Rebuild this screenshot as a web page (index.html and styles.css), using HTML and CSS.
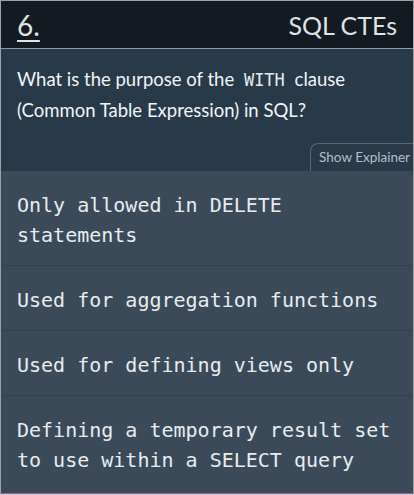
FILE: index.html
```html
<!DOCTYPE html>
<html>
<head>
<meta charset="utf-8">
<link rel="stylesheet" href="styles.css">
</head>
<body>
<div class="frame">
  <header class="top">
    <span class="num">6.</span>
    <span class="topic">SQL CTEs</span>
  </header>
  <section class="question">
    <p class="qtext">What is the purpose of the <code>WITH</code> clause (Common Table Expression) in SQL?</p>
    <div class="tabrow"><span class="tab">Show Explainer</span></div>
  </section>
  <ul class="options">
    <li>Only allowed in DELETE statements</li>
    <li>Used for aggregation functions</li>
    <li>Used for defining views only</li>
    <li>Defining a temporary result set to use within a SELECT query</li>
  </ul>
</div>
</body>
</html>
```
FILE: styles.css
```css
html, body {
  margin: 0;
  padding: 0;
  background: #d6c6d6;
}
.frame {
  width: 412px;
  height: 492px;
  border: 1px solid #9ea2a6;
  border-bottom-color: #8a6c8c;
  background: #3a4a59;
  overflow: hidden;
  display: flex;
  flex-direction: column;
}
.top {
  height: 47px;
  background: #141a21;
  border-bottom: 1px solid #8e9ba6;
  display: flex;
  align-items: center;
  justify-content: space-between;
  padding: 0 16px 0 16px;
  color: #dfe3e6;
  font-family: Lato, "Open Sans", sans-serif;
}
.num {
  font-size: 28px;
  font-weight: 400;
  text-decoration: underline;
  text-underline-offset: 4px;
  text-decoration-thickness: 2px;
}
.topic {
  font-size: 25px;
  font-weight: 400;
}
.question {
  background: #283a4a;
  padding: 15px 0 0 16px;
  display: flex;
  flex-direction: column;
}
.qtext {
  margin: 0;
  padding-right: 12px;
  font-family: Lato, "Open Sans", sans-serif;
  font-size: 18.5px;
  line-height: 30px;
  color: #f2f4f6;
}
.qtext code {
  display: inline-block;
  font-family: "DejaVu Sans Mono", monospace;
  font-size: 17px;
  line-height: 30px;
  margin: 0 5px;
  color: #e6eaee;
}
.tabrow {
  display: flex;
  justify-content: flex-end;
  margin-top: 18px;
}
.tab {
  border: 1px solid #55667a;
  border-right: none;
  border-bottom: none;
  border-top-left-radius: 8px;
  padding: 5px 3px 6px 8px;
  font-family: Lato, "Open Sans", sans-serif;
  font-size: 13.5px;
  line-height: 16px;
  color: #b6bec6;
}
.options {
  list-style: none;
  margin: 0;
  padding: 0;
  background: #3a4a59;
}
.options li {
  padding: 19px 16px 15px 16px;
  font-family: "DejaVu Sans Mono", monospace;
  font-size: 20px;
  line-height: 30px;
  color: #e8ecef;
  border-bottom: 1px solid #33424f;
}
.options li:last-child {
  border-bottom: none;
}
```
